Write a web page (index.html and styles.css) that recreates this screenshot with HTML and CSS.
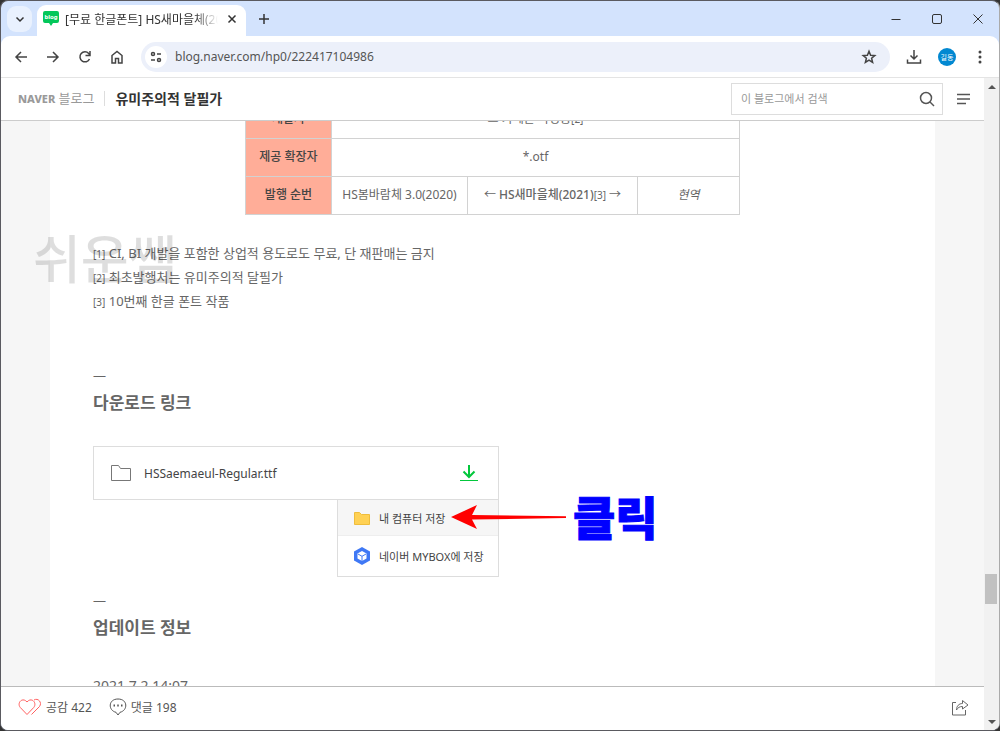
FILE: index.html
```html
<!DOCTYPE html>
<html lang="ko">

<head>
    <meta charset="utf-8">
    <title>[무료 한글폰트] HS새마을체(2021)</title>
    <link rel="stylesheet" href="styles.css">
</head>

<body>
    <div class="window">
        <div class="titlebar">
            <button class="tab-search" aria-label="탭 검색">
                <svg width="12" height="12" viewBox="0 0 12 12"><path d="M2.500 4.500 6 8l3.500-3.500"/></svg>
            </button>
            <div class="tab">
                <svg class="favicon" width="16" height="15" viewBox="0 0 16 15">
                    <path d="M2 0h12a2 2 0 0 1 2 2v8a2 2 0 0 1-2 2h-4l-2 3-2-3H2a2 2 0 0 1-2-2V2a2 2 0 0 1 2-2z"/>
                    <text x="8" y="8" text-anchor="middle">blog</text>
                </svg>
                <span class="tab-title">[무료 한글폰트] HS새마을체(2021)</span>
                <button class="tab-close" aria-label="탭 닫기">
                    <svg width="10" height="10" viewBox="0 0 10 10"><path d="M1.500 1.500l7 7M8.500 1.500l-7 7"/></svg>
                </button>
            </div>
            <button class="new-tab" aria-label="새 탭">
                <svg width="12" height="12" viewBox="0 0 12 12"><path d="M6 1v10M1 6h10"/></svg>
            </button>
            <div class="window-controls">
                <button aria-label="최소화"><svg width="12" height="12" viewBox="0 0 12 12"><path d="M1.500 6.500h9"/></svg></button>
                <button aria-label="최대화"><svg width="12" height="12" viewBox="0 0 12 12"><rect x="1.500" y="1.500" width="9" height="9" rx="1.500"/></svg></button>
                <button aria-label="닫기"><svg width="12" height="12" viewBox="0 0 12 12"><path d="M1.500 1.500l9 9M10.500 1.500l-9 9"/></svg></button>
            </div>
        </div>

        <div class="toolbar">
            <button aria-label="뒤로"><svg width="16" height="16" viewBox="0 0 16 16"><path d="M14 8H3M8 3 3 8l5 5"/></svg></button>
            <button aria-label="앞으로"><svg width="16" height="16" viewBox="0 0 16 16"><path d="M2 8h11M8 3l5 5-5 5"/></svg></button>
            <button aria-label="새로고침"><svg width="16" height="16" viewBox="0 0 16 16"><path d="M12.500 10a5 5 0 1 1-.8-5.500L13 6M13 2v4.500H8.500"/></svg></button>
            <button aria-label="홈"><svg width="16" height="16" viewBox="0 0 16 16"><path d="M3 6.500 8 2.500l5 4V14H9.500V9.500h-3V14H3z"/></svg></button>
            <div class="address">
                <button class="site-info" aria-label="사이트 정보">
                    <svg width="14" height="14" viewBox="0 0 14 14"><circle cx="4" cy="4" r="1.500"/><path d="M8 4h4M2 10h4"/><circle cx="10" cy="10" r="1.500"/></svg>
                </button>
                <input type="text" aria-label="주소창" value="blog.naver.com/hp0/222417104986">
                <button class="bookmark" aria-label="북마크">
                    <svg width="16" height="16" viewBox="0 0 16 16"><path d="M8 2.300l1.600 3.900 4.200.3-3.200 2.700 1 4.100L8 11.100l-3.600 2.200 1-4.100L2.200 6.500l4.200-.3z"/></svg>
                </button>
            </div>
            <button class="downloads" aria-label="다운로드"><svg width="16" height="16" viewBox="0 0 16 16"><path d="M8 1v9M4.500 6.500 8 10l3.500-3.500M1.500 10.500V14h13v-3.500"/></svg></button>
            <button class="profile" aria-label="프로필">길동</button>
            <button class="more" aria-label="더보기"><svg width="16" height="16" viewBox="0 0 16 16"><circle cx="8" cy="3" r="1.500"/><circle cx="8" cy="8" r="1.500"/><circle cx="8" cy="13" r="1.500"/></svg></button>
        </div>

        <div class="viewport">
            <div class="page">
                <header class="blog-header">
                    <a class="logo" href="#"><b>NAVER</b> 블로그</a>
                    <a class="blog-name" href="#">유미주의적 달필가</a>
                    <form class="search">
                        <input type="text" aria-label="블로그 검색" placeholder="이 블로그에서 검색">
                        <button type="button" aria-label="검색"><svg width="16" height="16" viewBox="0 0 16 16"><circle cx="7" cy="7" r="5.500"/><path d="M11 11l4 4"/></svg></button>
                    </form>
                    <button class="menu-button" aria-label="메뉴"><svg width="14" height="12" viewBox="0 0 14 12"><path d="M0 1.500h13M0 6h13M0 10.500h9"/></svg></button>
                </header>

                <div class="scroller">
                    <article class="post">
                        <table class="font-info">
                            <colgroup>
                                <col class="label">
                                <col class="prev">
                                <col class="current">
                                <col>
                            </colgroup>
                            <tr>
                                <th>개발자</th>
                                <td colspan="3">그 카페는 작성중<small>[2]</small></td>
                            </tr>
                            <tr>
                                <th>제공 확장자</th>
                                <td colspan="3">*.otf</td>
                            </tr>
                            <tr>
                                <th>발행 순번</th>
                                <td>HS봄바람체 3.0(2020)</td>
                                <td>← <b>HS새마을체(2021)</b><small>[3]</small> →</td>
                                <td><i>현역</i></td>
                            </tr>
                        </table>

                        <div class="notes">
                            <p><small>[1]</small> CI, BI 개발을 포함한 상업적 용도로도 무료, 단 재판매는 금지</p>
                            <p><small>[2]</small> 최초발행처는 유미주의적 달필가</p>
                            <p><small>[3]</small> 10번째 한글 폰트 작품</p>
                            <span class="watermark">쉬운쌤</span>
                        </div>

                        <p class="dash">—</p>
                        <h2>다운로드 링크</h2>
                        <div class="file">
                            <svg width="22" height="18" viewBox="0 0 22 18"><path stroke="#777" d="M1.500 16.500v-15h7l2 3h10v12z"/></svg>
                            <span class="file-name">HSSaemaeul-Regular.ttf</span>
                            <button class="file-save" aria-label="파일 저장">
                                <svg width="20" height="18" viewBox="0 0 20 18"><path class="arrow" d="M10 1v12M4.500 7.500 10 13l5.500-5.500"/><path d="M1 16.500h18"/></svg>
                            </button>
                            <div class="save-menu">
                                <button class="selected">
                                    <svg width="18" height="18" viewBox="0 0 18 18"><path fill="#ffd154" stroke="#efbd3c" d="M1.500 3.500h5l2 2h8v10h-15z"/></svg>
                                    내 컴퓨터 저장
                                </button>
                                <button>
                                    <svg width="18" height="18" viewBox="0 0 18 18"><path fill="#3f78f5" d="M9 0l8 4.500v9L9 18l-8-4.500v-9z"/><path fill="#fff" d="M9 4l4.500 2.500v5L9 14l-4.500-2.500v-5z"/><path fill="none" stroke="#3f78f5" d="M5 7l4 2.300L13 7M9 9.300V14"/></svg>
                                    네이버 MYBOX에 저장
                                </button>
                            </div>
                            <div class="callout">
                                <svg width="116" height="24" viewBox="0 0 116 24"><path fill="#f00" d="M0 12 26 0l-5 10 94 1.300v1.800L21 14.500 26 24z"/></svg>
                                <span>클릭</span>
                            </div>
                        </div>

                        <p class="dash after-file">—</p>
                        <h2>업데이트 정보</h2>
                        <p class="date">2021.7.2.14:07</p>
                    </article>
                </div>

                <footer class="post-bar">
                    <button>
                        <svg width="24" height="18" viewBox="0 0 24 18"><path stroke="#ff6060" d="M9 16.500 2.300 9.500C-1.500 5 4.500-1.500 9 4c4.500-5.500 10.500 1 6.700 5.500zM16 2c4-2.500 8.500 2.500 5.500 6.500L13.500 16.500"/></svg>
                        공감 422
                    </button>
                    <button>
                        <svg width="18" height="18" viewBox="0 0 18 18"><path stroke="#555" d="M7 14.300C-1 12.500-1 1 9 1s10 11.500 2 13.300L9 17z"/><path stroke="#555" stroke-width="2" d="M4.500 7.500h1.500M8.250 7.500h1.500M12 7.500h1.500"/></svg>
                        댓글 198
                    </button>
                    <button class="share" aria-label="공유">
                        <svg width="18" height="17" viewBox="0 0 18 17"><path stroke="#666" d="M5 3.500H1.500v12.500h13v-5M5.500 11c0-4 2.500-6.500 6-6.500V1.500l5.500 4.500-5.500 4V7.500c-3 0-4.500 1-6 3.500z"/></svg>
                    </button>
                </footer>
            </div>

            <div class="scrollbar">
                <button class="up" aria-label="위로"></button>
                <div class="track">
                    <div class="thumb"></div>
                </div>
                <button class="down" aria-label="아래로"></button>
            </div>
        </div>
    </div>
</body>

</html>
```

FILE: styles.css
```css
* {
    box-sizing: border-box;
}

body {
    margin: 0;
    background: #333;
    color: #666;
    font-family: "Noto Sans", "Noto Sans CJK KR", sans-serif;
    font-size: 13px;
}

button,
input {
    padding: 0;
    border: 0;
    background: none;
    color: inherit;
    font: inherit;
}

button {
    display: flex;
    align-items: center;
    justify-content: center;
}

svg {
    flex: none;
    fill: none;
    stroke: currentColor;
}

p,
h2 {
    margin: 0;
}

a {
    text-decoration: none;
}

.window {
    display: flex;
    flex-direction: column;
    height: 100vh;
    border: 1px solid #5a5a60;
    border-right-color: #aaa;
    border-radius: 8px;
    overflow: hidden;
    background: #d3e3fd;
}

/* tab strip */
.titlebar {
    display: flex;
    align-items: center;
    height: 35px;
    padding-left: 6px;
    color: #333;
}

.titlebar svg {
    stroke-width: 1.5;
}

.tab-search {
    width: 25px;
    height: 26px;
    border-radius: 9px;
    background: #e9f1fe;
}

.tab {
    display: flex;
    align-items: center;
    align-self: flex-end;
    width: 209px;
    height: 31px;
    margin-left: 5px;
    padding: 0 9px 4px 6px;
    border-radius: 9px 9px 0 0;
    background: #fff;
}

.tab .favicon {
    fill: #03c75a;
    stroke: none;
}

.favicon text {
    fill: #fff;
    font-size: 6px;
    font-weight: bold;
}

.tab-title {
    flex: 1;
    margin: 0 9px 0 6px;
    overflow: hidden;
    white-space: nowrap;
    font-size: 12px;
    mask-image: linear-gradient(to right, #000 85%, transparent);
}

.new-tab {
    margin-left: 12px;
}

.window-controls {
    display: flex;
    gap: 29px;
    margin-left: auto;
    padding-right: 15px;
}

.titlebar .window-controls svg {
    stroke-width: 1;
}

/* address bar */
.toolbar {
    display: flex;
    align-items: center;
    gap: 16px;
    height: 42px;
    padding: 0 11px 0 12px;
    border-bottom: 1px solid #e4e4e4;
    border-radius: 9px 9px 0 0;
    background: #fff;
    color: #444;
}

.toolbar svg {
    stroke-width: 1.5;
}

.address {
    display: flex;
    flex: 1;
    align-items: center;
    height: 30px;
    padding: 0 13px 0 4px;
    border-radius: 15px;
    background: #ecf0fa;
}

.site-info {
    width: 22px;
    height: 22px;
    border-radius: 50%;
    background: #fff;
}

.address input {
    flex: 1;
    min-width: 0;
    margin-left: 8px;
    color: #555;
    font-size: 12px;
}

.profile {
    width: 18px;
    height: 18px;
    border-radius: 50%;
    background: #0288d1;
    color: #fff;
    font-size: 7px;
}

.toolbar .more svg {
    fill: #444;
    stroke: none;
}

.viewport {
    display: flex;
    flex: 1;
    min-height: 0;
    background: #fff;
}

.page {
    display: flex;
    flex: 1;
    flex-direction: column;
    min-width: 0;
}

.blog-header {
    display: flex;
    align-items: center;
    height: 43px;
    padding: 0 13px 1px 17px;
    border-bottom: 1px solid #ccc;
}

.logo {
    padding-right: 10px;
    border-right: 1px solid #ddd;
    color: #999;
    line-height: 14px;
}

.logo b {
    font-size: 11px;
    font-weight: 800;
}

.blog-name {
    margin-left: 10px;
    color: #333;
    font-size: 14px;
    font-weight: bold;
    line-height: 18px;
}

.search {
    display: flex;
    align-items: center;
    width: 212px;
    height: 32px;
    margin-left: auto;
    padding: 0 7px 0 9px;
    border: 1px solid #ddd;
}

.search input {
    flex: 1;
    min-width: 0;
    font-size: 11px;
}

.search input::placeholder {
    color: #999;
}

.search svg,
.menu-button svg {
    stroke: #555;
    stroke-width: 1.5;
}

.menu-button {
    margin-left: 14px;
}

.scroller {
    flex: 1;
    min-height: 0;
    overflow: hidden;
    background: #f6f6f6;
}

/* scrolled so that the first table row is half hidden */
.post {
    margin: -21px 49px 0;
    padding: 0 43px;
    background: #fff;
}

.font-info {
    width: 495px;
    margin: 0 auto;
    border-collapse: collapse;
    table-layout: fixed;
    font-size: 12px;
    text-align: center;
}

.font-info th,
.font-info td {
    height: 38px;
    padding: 0 0 2px;
    border: 1px solid #d2d2d2;
    line-height: 18px;
}

.font-info th {
    background: #ffad98;
    color: #444;
    font-weight: 500;
}

.font-info b {
    font-weight: 500;
}

.label {
    width: 86px;
}

.prev {
    width: 136px;
}

.current {
    width: 170px;
}

.font-info small,
.notes small {
    font-size: 10px;
    line-height: 1;
}

.notes {
    position: relative;
    margin-top: 26px;
    line-height: 24px;
}

.watermark {
    position: absolute;
    top: -20px;
    left: -60px;
    color: rgba(0, 0, 0, 0.13);
    font-size: 52px;
    font-weight: 500;
    line-height: 76px;
}

.dash {
    margin-top: 50px;
    line-height: 25px;
}

.post h2 {
    font-size: 17px;
    font-weight: bold;
    line-height: 30px;
}

.file {
    position: relative;
    display: flex;
    align-items: center;
    width: 406px;
    height: 54px;
    margin-top: 28px;
    padding: 0 19px 0 16px;
    border: 1px solid #ddd;
    color: #444;
    font-size: 12px;
}

.file-name {
    margin-left: 12px;
}

.file-save {
    margin-left: auto;
    color: #03c73c;
}

.file-save .arrow {
    stroke-width: 2;
}

.save-menu {
    position: absolute;
    top: 52px;
    right: -1px;
    width: 162px;
    border: 1px solid #ddd;
    background: #fff;
}

.save-menu button {
    justify-content: flex-start;
    gap: 8px;
    width: 100%;
    height: 40px;
    padding-left: 15px;
    font-size: 11px;
}

.save-menu .selected {
    height: 36px;
    border-bottom: 1px solid #eee;
    background: #f6f6f6;
}

.save-menu svg {
    stroke: none;
}

.callout {
    position: absolute;
    top: 35px;
    left: 357px;
    display: flex;
    align-items: center;
    gap: 6px;
    color: #00f;
    font-size: 46px;
    font-weight: 900;
    line-height: 70px;
    white-space: nowrap;
}

.callout svg {
    stroke: none;
}

.callout span {
    -webkit-text-stroke: 1px #00f;
}

.after-file {
    margin-top: 88px;
}

.date {
    margin-top: 31px;
    font-size: 14px;
    line-height: 24px;
}

.post-bar {
    display: flex;
    align-items: center;
    gap: 17px;
    height: 44px;
    padding: 0 15px 3px 17px;
    border-top: 1px solid #bbb;
    color: #555;
    font-size: 12px;
}

.post-bar button {
    gap: 4px;
}

.post-bar .share {
    margin-left: auto;
}

.scrollbar {
    display: flex;
    flex-direction: column;
    width: 15px;
    background: #f1f1f1;
}

.scrollbar button {
    height: 17px;
}

.scrollbar button::before {
    content: '';
    border: 4px solid transparent;
}

.scrollbar .up::before {
    border-top: 0;
    border-bottom-color: #555;
}

.scrollbar .down::before {
    border-bottom: 0;
    border-top-color: #555;
}

.track {
    display: flex;
    flex: 1;
    flex-direction: column;
    padding: 0 2px 0 1px;
}

.track::before {
    content: '';
    flex: 163;
}

.track::after {
    content: '';
    flex: 37;
}

.thumb {
    height: 30px;
    background: #c1c1c1;
}
```
